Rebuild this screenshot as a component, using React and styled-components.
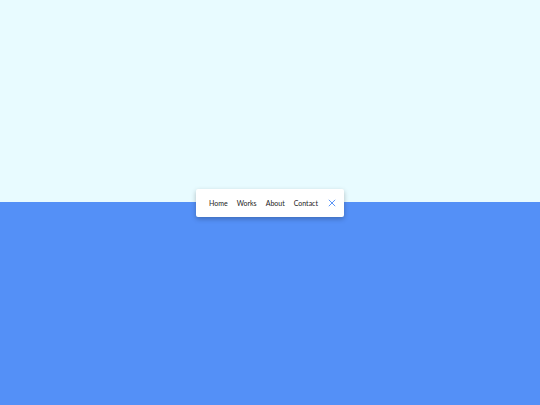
import React from "react";
import styled, { createGlobalStyle } from "styled-components";

const GlobalStyle = createGlobalStyle`
  html, body, #root {
    margin: 0;
    height: 100%;
  }
  body {
    font-family: "Lato", "Noto Sans", sans-serif;
  }
`;

const Page = styled.div`
  display: grid;
  grid-template-rows: 202px 1fr;
  height: 100vh;
`;

const Half = styled.div`
  grid-column: 1;
  background: ${(p) => p.color};
`;

const Nav = styled.nav`
  grid-column: 1;
  grid-row: 1 / 3;
  place-self: center;
  display: flex;
  align-items: center;
  gap: 9px;
  height: 28px;
  padding: 0 8px 0 13px;
  background: #ffffff;
  border-radius: 2px;
  box-shadow: 0 2px 5px rgba(0, 0, 0, 0.25);
  box-sizing: border-box;
`;

const Link = styled.a`
  font-size: 7px;
  color: #222;
  text-decoration: none;
`;

const Close = styled.button`
  display: flex;
  padding: 0;
  margin-left: 1px;
  border: none;
  background: none;
  cursor: pointer;
`;

export default function App() {
  return (
    <Page>
      <GlobalStyle />
      <Half color="#e8fbff" style={{ gridRow: 1 }} />
      <Half color="#5490f7" style={{ gridRow: 2 }} />
      <Nav>
        {["Home", "Works", "About", "Contact"].map((l) => (
          <Link key={l} href="#">
            {l}
          </Link>
        ))}
        <Close aria-label="close">
          <svg width="8" height="8" viewBox="0 0 10 10">
            <path d="M1 1 L9 9 M9 1 L1 9" stroke="#5490f7" strokeWidth="1.2" />
          </svg>
        </Close>
      </Nav>
    </Page>
  );
}
